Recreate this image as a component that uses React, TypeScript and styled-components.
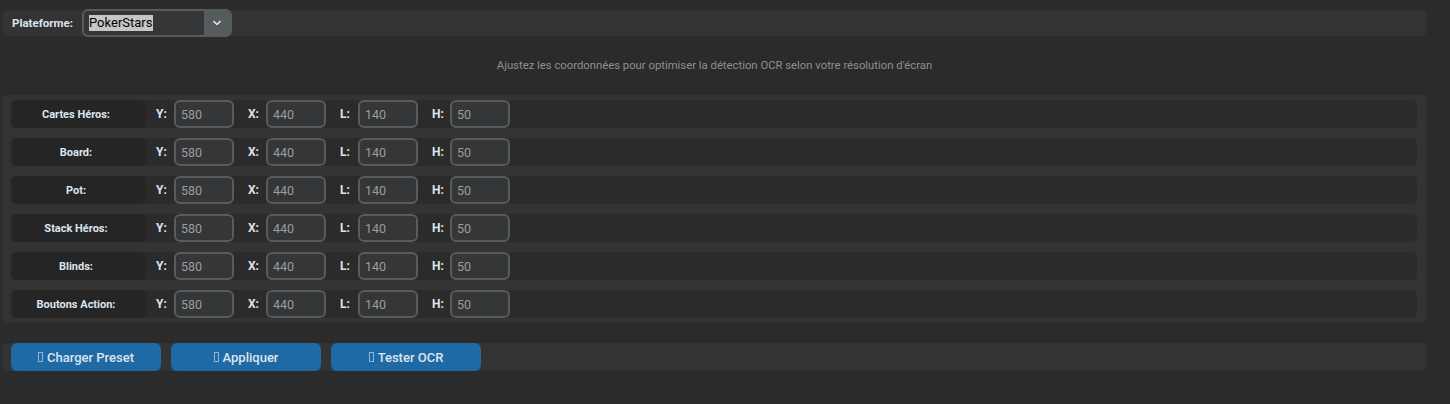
import styled, { createGlobalStyle } from "styled-components";

const GlobalStyle = createGlobalStyle`
  html, body {
    margin: 0;
    padding: 0;
    background: #2b2b2b;
  }
  body {
    font-family: Roboto, "Liberation Sans", sans-serif;
    color: #dce4ee;
  }
`;

const Page = styled.div`
  width: 1450px;
  height: 404px;
  box-sizing: border-box;
  padding: 10px 23px 0 2px;
  overflow: hidden;
`;

const Bar = styled.div`
  height: 26px;
  background: #333333;
  border-radius: 6px;
  display: flex;
  align-items: center;
  padding-left: 10px;
`;

const TopLabel = styled.span`
  font-size: 11.5px;
  font-weight: 700;
  width: 70px;
`;

const Combo = styled.div`
  width: 150px;
  height: 28px;
  box-sizing: border-box;
  border: 2px solid #565b5e;
  border-radius: 6px;
  background: #343638;
  display: flex;
  margin: -1px 0;
  overflow: hidden;
`;

const ComboText = styled.div`
  flex: 1;
  display: flex;
  align-items: center;
  padding-left: 5px;
  font-size: 13px;

  span {
    background: #c6c6c6;
    color: #000;
    line-height: 16px;
    padding-right: 1px;
  }
`;

const ComboArrow = styled.div`
  width: 26px;
  background: #565b5e;
  display: flex;
  align-items: center;
  justify-content: center;
`;

const Hint = styled.div`
  height: 59px;
  display: flex;
  align-items: center;
  justify-content: center;
  font-size: 11.3px;
  color: #8f8f8f;
`;

const CoordsFrame = styled.div`
  background: #333333;
  border-radius: 6px;
  padding: 5px 10px 5px 8px;
  display: flex;
  flex-direction: column;
  gap: 10px;
`;

const Row = styled.div`
  height: 28px;
  background: #2b2b2b;
  border-radius: 6px;
  display: flex;
  align-items: center;
`;

const RowName = styled.div`
  width: 134px;
  height: 28px;
  box-sizing: border-box;
  margin-left: 2px;
  padding-right: 6px;
  background: #252525;
  border-radius: 6px;
  display: flex;
  align-items: center;
  justify-content: center;
  font-size: 11px;
  font-weight: 700;
`;

const Field = styled.div`
  display: flex;
  align-items: center;
  margin-right: 4px;
`;

const FieldLabel = styled.span`
  width: 28px;
  box-sizing: border-box;
  padding-left: 10px;
  font-size: 12px;
  font-weight: 700;
`;

const Entry = styled.div`
  width: 60px;
  height: 28px;
  box-sizing: border-box;
  border: 2px solid #565b5e;
  border-radius: 6px;
  background: #343638;
  display: flex;
  align-items: center;
  padding-left: 5px;
  font-size: 12.5px;
  color: #9c9c9c;
`;

const ButtonBar = styled.div`
  margin-top: 20px;
  height: 28px;
  background: #333333;
  border-radius: 6px;
  display: flex;
  gap: 10px;
  padding-left: 9px;
`;

const Button = styled.div`
  width: 150px;
  height: 28px;
  background: #1f6aa5;
  border-radius: 6px;
  display: flex;
  align-items: center;
  justify-content: center;
  gap: 4px;
  font-size: 13px;
  font-weight: 500;
  color: #dce4ee;
`;

const Tofu = styled.span`
  display: inline-block;
  width: 3px;
  height: 8px;
  border: 1px solid #8fb4d4;
  margin-top: -1px;
`;

const rows = ["Cartes Héros:", "Board:", "Pot:", "Stack Héros:", "Blinds:", "Boutons Action:"];
const fields = [
  { label: "Y:", value: "580" },
  { label: "X:", value: "440" },
  { label: "L:", value: "140" },
  { label: "H:", value: "50" },
];
const buttons = ["Charger Preset", "Appliquer", "Tester OCR"];

const App = () => {
  return (
    <Page>
      <GlobalStyle />
      <Bar>
        <TopLabel>Plateforme:</TopLabel>
        <Combo>
          <ComboText>
            <span>PokerStars</span>
          </ComboText>
          <ComboArrow>
            <svg width="10" height="6" viewBox="0 0 10 6">
              <path d="M1.5 1.2 L5 4.5 L8.5 1.2" stroke="#dce4ee" strokeWidth="1.6" fill="none" />
            </svg>
          </ComboArrow>
        </Combo>
      </Bar>
      <Hint>Ajustez les coordonnées pour optimiser la détection OCR selon votre résolution d'écran</Hint>
      <CoordsFrame>
        {rows.map((name) => (
          <Row key={name}>
            <RowName>{name}</RowName>
            {fields.map((f) => (
              <Field key={f.label}>
                <FieldLabel>{f.label}</FieldLabel>
                <Entry>{f.value}</Entry>
              </Field>
            ))}
          </Row>
        ))}
      </CoordsFrame>
      <ButtonBar>
        {buttons.map((b) => (
          <Button key={b}>
            <Tofu />
            {b}
          </Button>
        ))}
      </ButtonBar>
    </Page>
  );
};

export default App;
